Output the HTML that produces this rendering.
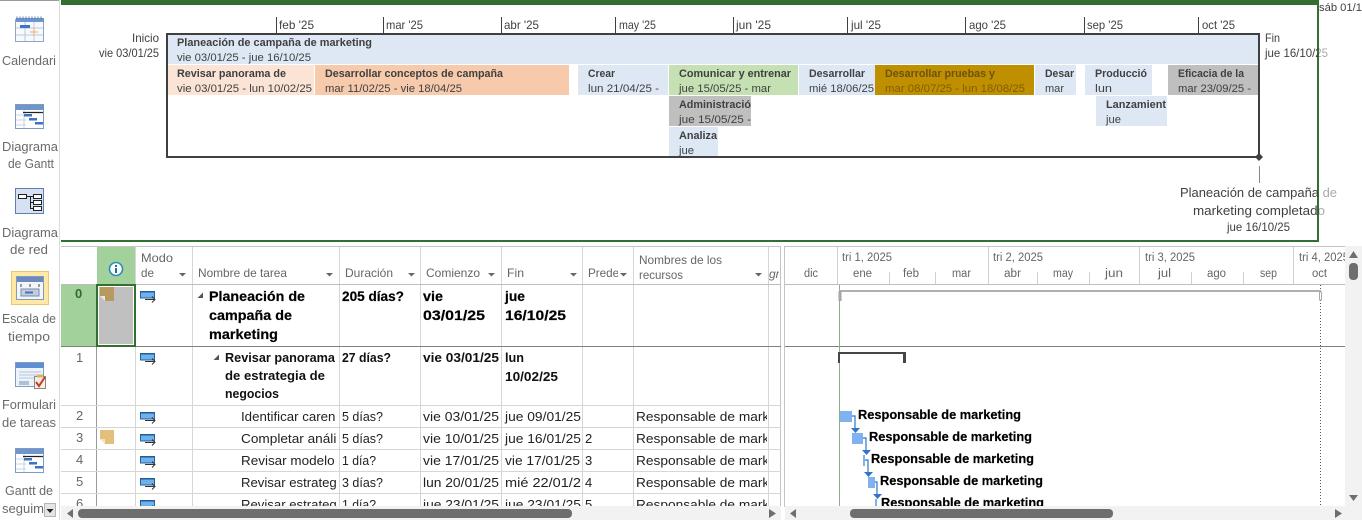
<!DOCTYPE html>
<html lang="es">
<head>
<meta charset="utf-8">
<title>Planeación de campaña de marketing</title>
<style>
html,body{margin:0;padding:0;background:#fff;width:1362px;height:520px;overflow:hidden}
svg{display:block}
text{font-family:"Liberation Sans",sans-serif;white-space:pre}
.side{font-size:13px;fill:#6a6a6a}
.mon{font-size:12px;fill:#404040}
.bb{font-size:11px;font-weight:bold;fill:#404040}
.br{font-size:11px;fill:#404040}
.hd{font-size:12px;fill:#666}
.gh{font-size:11.5px;fill:#666}
.t{font-size:13px;fill:#222}
.tb{font-size:14px;font-weight:bold;fill:#000;stroke:#000;stroke-width:.2}
.tb2{font-size:13px;font-weight:bold;fill:#111}
.n{font-size:13px;fill:#666}
.lab{font-size:13px;font-weight:bold;fill:#000;stroke:#000;stroke-width:.2}
</style>
</head>
<body>
<svg width="1362" height="520" viewBox="0 0 1362 520" xmlns="http://www.w3.org/2000/svg">
<defs>
<clipPath id="cName"><rect x="193" y="285" width="143" height="222"/></clipPath>
<clipPath id="cGrid"><rect x="61" y="285" width="720" height="222"/></clipPath>
<clipPath id="cFin"><rect x="502" y="285" width="79" height="222"/></clipPath>
<clipPath id="cRes"><rect x="634" y="285" width="133" height="222"/></clipPath>
<clipPath id="cGantt"><rect x="785" y="285" width="560" height="221"/></clipPath>
<clipPath id="cHead"><rect x="785" y="247" width="560" height="38"/></clipPath>
<clipPath id="cPre"><rect x="584" y="260" width="34" height="24"/></clipPath>
<clipPath id="cAgr"><rect x="769" y="262" width="10" height="20"/></clipPath>
<clipPath id="cSeg"><rect x="0" y="500" width="44" height="20"/></clipPath>
<g id="mode">
<rect x="0.5" y="1.500" width="14" height="6.500" fill="#6fb1ea" stroke="#2a5f9e"/>
<rect x="0" y="1" width="15" height="1.500" fill="#1f5c9e"/>
<path d="M5 9.500H15M12 6.500l3 3-3 3" fill="none" stroke="#333" stroke-width="1"/>
</g>
<g id="gicon">
<rect x="0.5" y="0.5" width="28" height="24" fill="#fff" stroke="#7d9cc4"/>
<rect x="1" y="1" width="28" height="5" fill="#6f96cc"/>
<path d="M1 11h10M1 16h10M1 21h10M9 6v18" stroke="#c5d3e6" fill="none"/>
<path d="M8 8.500h20" stroke="#222" stroke-width="1.200"/>
<rect x="9" y="10" width="8" height="2.500" fill="#3f74c4"/>
<rect x="14" y="14" width="8" height="2.500" fill="#3f74c4"/>
<rect x="20" y="18" width="8" height="2.500" fill="#3f74c4"/>
</g>
</defs>

<rect width="1362" height="520" fill="#fff"/>

<!-- Left sidebar -->
<rect x="0" y="0" width="59" height="1" fill="#9a9a9a"/>
<rect x="59" y="0" width="1" height="520" fill="#dcdcdc"/>

<g>
<rect x="15.500" y="19.500" width="28" height="22" fill="#f8f9fc" stroke="#8ea6c8"/>
<rect x="16" y="18" width="28" height="4" fill="#6f96cc"/>
<path d="M17 16.500v3M20 16.500v3M23 16.500v3M26 16.500v3M29 16.500v3M32 16.500v3M35 16.500v3M38 16.500v3M41 16.500v3" stroke="#5b7fb5" fill="none"/>
<path d="M16 28h27M16 35h27M25 22v19M34 22v19" stroke="#bcc9dc" fill="none"/>
<rect x="20" y="25" width="10" height="3" fill="#3f74c4"/>
<path d="M30 32h8M34 28v8" stroke="#e5b26a" fill="none"/>
</g>
<text class="side" x="2" y="65" textLength="54" lengthAdjust="spacingAndGlyphs">Calendari</text>

<use href="#gicon" x="15" y="104"/>
<text class="side" x="2" y="151" textLength="56" lengthAdjust="spacingAndGlyphs">Diagrama</text>
<text class="side" x="8" y="168" textLength="46" lengthAdjust="spacingAndGlyphs">de Gantt</text>

<g>
<rect x="15.500" y="188.500" width="28" height="25" fill="#d6e1f2" stroke="#5d7fb3"/>
<g fill="#fff" stroke="#222">
<rect x="18.500" y="194.500" width="8" height="4"/>
<rect x="33.500" y="194.500" width="8" height="4"/>
<rect x="33.500" y="200.500" width="8" height="4"/>
<rect x="33.500" y="206.500" width="8" height="4"/>
</g>
<path d="M26.500 196.500h7M30.500 196.500v12h3M30.500 202.500h3" stroke="#222" fill="none"/>
</g>
<text class="side" x="2" y="237" textLength="56" lengthAdjust="spacingAndGlyphs">Diagrama</text>
<text class="side" x="10" y="254" textLength="38" lengthAdjust="spacingAndGlyphs">de red</text>

<rect x="11.500" y="271.500" width="37" height="33" fill="#fde8a6" stroke="#e8c56e"/>
<g>
<rect x="16.500" y="276.500" width="27" height="23" fill="#f3f5f9" stroke="#7d9cc4"/>
<rect x="17" y="277" width="26" height="5" fill="#6f88bf"/>
<path d="M21 284v3M30 284v3M39 284v3" stroke="#444"/>
<rect x="21" y="289" width="18" height="7" fill="#c3cddd" stroke="#7a8aa5"/>
<rect x="25" y="291.500" width="8" height="2" fill="#3f74c4"/>
</g>
<text class="side" x="2" y="323" textLength="54" lengthAdjust="spacingAndGlyphs">Escala de</text>
<text class="side" x="8" y="341" textLength="42" lengthAdjust="spacingAndGlyphs">tiempo</text>

<g>
<rect x="15.500" y="362.500" width="28" height="24" fill="#eef3fa" stroke="#7d9cc4"/>
<rect x="16" y="363" width="28" height="5" fill="#5f8fd0"/>
<path d="M19 372h22M19 375h22M19 378h22" stroke="#b3c4dc"/>
<rect x="19" y="381" width="10" height="4" fill="#aebfd8"/>
<rect x="34.500" y="376.500" width="11" height="12" fill="#f5f0e4" stroke="#8a8a8a"/>
<rect x="37" y="374.500" width="6" height="3" fill="#e0b060"/>
<path d="M36 382l3 4 6-9" stroke="#c8392b" stroke-width="2" fill="none"/>
</g>
<text class="side" x="2" y="409" textLength="54" lengthAdjust="spacingAndGlyphs">Formulari</text>
<text class="side" x="2" y="427" textLength="54" lengthAdjust="spacingAndGlyphs">de tareas</text>

<use href="#gicon" x="15" y="448"/>
<text class="side" x="5" y="495" textLength="48" lengthAdjust="spacingAndGlyphs">Gantt de</text>
<text class="side" x="2" y="513" clip-path="url(#cSeg)">seguimiento</text>
<rect x="44.500" y="503.500" width="11" height="13" fill="#e4e4e4" stroke="#b5b5b5"/>
<path d="M46.500 509h7l-3.500 4z" fill="#222"/>

<!-- Timeline -->
<rect x="61" y="0" width="1257" height="5" fill="#33702f"/>
<rect x="1317" y="0" width="2" height="240" fill="#33702f"/>
<rect x="61" y="240" width="1258" height="2" fill="#33702f"/>
<text class="br" x="1319" y="11" textLength="43" lengthAdjust="spacingAndGlyphs">sáb 01/1</text>

<g fill="#404040">
<rect x="276" y="17" width="1" height="17"/><rect x="383" y="17" width="1" height="17"/>
<rect x="501" y="17" width="1" height="17"/><rect x="615" y="17" width="1" height="17"/>
<rect x="733" y="17" width="1" height="17"/><rect x="847" y="17" width="1" height="17"/>
<rect x="965" y="17" width="1" height="17"/><rect x="1084" y="17" width="1" height="17"/>
<rect x="1198" y="17" width="1" height="17"/>
</g>
<text class="mon" x="279" y="29" textLength="35" lengthAdjust="spacingAndGlyphs">feb '25</text>
<text class="mon" x="386" y="29" textLength="37" lengthAdjust="spacingAndGlyphs">mar '25</text>
<text class="mon" x="504" y="29" textLength="35" lengthAdjust="spacingAndGlyphs">abr '25</text>
<text class="mon" x="619" y="29" textLength="37" lengthAdjust="spacingAndGlyphs">may '25</text>
<text class="mon" x="736" y="29" textLength="35" lengthAdjust="spacingAndGlyphs">jun '25</text>
<text class="mon" x="851" y="29" textLength="30" lengthAdjust="spacingAndGlyphs">jul '25</text>
<text class="mon" x="969" y="29" textLength="37" lengthAdjust="spacingAndGlyphs">ago '25</text>
<text class="mon" x="1087" y="29" textLength="36" lengthAdjust="spacingAndGlyphs">sep '25</text>
<text class="mon" x="1202" y="29" textLength="33" lengthAdjust="spacingAndGlyphs">oct '25</text>

<text class="mon" x="132" y="42" textLength="27" lengthAdjust="spacingAndGlyphs">Inicio</text>
<text class="mon" x="99" y="57" textLength="60" lengthAdjust="spacingAndGlyphs">vie 03/01/25</text>
<text class="mon" x="1265" y="42" textLength="15" lengthAdjust="spacingAndGlyphs">Fin</text>
<text class="mon" x="1265" y="57" textLength="63" lengthAdjust="spacingAndGlyphs">jue 16/10/25</text>

<!-- Timeline bars -->
<rect x="168" y="35" width="1090" height="29" fill="#dee8f5"/>
<rect x="168" y="65" width="146" height="30" fill="#fbe4d6"/>
<rect x="315" y="65" width="254" height="30" fill="#f7caac"/>
<rect x="578" y="65" width="90" height="30" fill="#dee8f5"/>
<rect x="669" y="65" width="129" height="30" fill="#c5e0b3"/>
<rect x="799" y="65" width="76" height="30" fill="#dee8f5"/>
<rect x="875" y="65" width="159" height="30" fill="#bf8f00"/>
<rect x="1035" y="65" width="41" height="30" fill="#dee8f5"/>
<rect x="1085" y="65" width="67" height="30" fill="#dee8f5"/>
<rect x="1168" y="65" width="90" height="30" fill="#bfbfbf"/>
<rect x="669" y="96" width="82" height="30" fill="#bfbfbf"/>
<rect x="1096" y="96" width="71" height="30" fill="#dee8f5"/>
<rect x="669" y="127" width="49" height="29" fill="#dee8f5"/>
<rect x="167" y="34" width="1092" height="123" fill="none" stroke="#404040" stroke-width="2"/>

<text class="bb" x="177" y="46" textLength="195" lengthAdjust="spacingAndGlyphs">Planeación de campaña de marketing</text>
<text class="br" x="177" y="61" textLength="134" lengthAdjust="spacingAndGlyphs">vie 03/01/25 - jue 16/10/25</text>
<text class="bb" x="177" y="77" textLength="109" lengthAdjust="spacingAndGlyphs">Revisar panorama de</text>
<text class="br" x="177" y="92" textLength="135" lengthAdjust="spacingAndGlyphs">vie 03/01/25 - lun 10/02/25</text>
<text class="bb" x="325" y="77" textLength="178" lengthAdjust="spacingAndGlyphs">Desarrollar conceptos de campaña</text>
<text class="br" x="325" y="92" textLength="137" lengthAdjust="spacingAndGlyphs">mar 11/02/25 - vie 18/04/25</text>
<text class="bb" x="588" y="77" textLength="27" lengthAdjust="spacingAndGlyphs">Crear</text>
<text class="br" x="588" y="92" textLength="71" lengthAdjust="spacingAndGlyphs">lun 21/04/25 -</text>
<text class="bb" x="679" y="77" textLength="112" lengthAdjust="spacingAndGlyphs">Comunicar y entrenar</text>
<text class="br" x="679" y="92" textLength="92" lengthAdjust="spacingAndGlyphs">jue 15/05/25 - mar</text>
<text class="bb" x="809" y="77" textLength="56" lengthAdjust="spacingAndGlyphs">Desarrollar</text>
<text class="br" x="809" y="92" textLength="65" lengthAdjust="spacingAndGlyphs">mié 18/06/25</text>
<text class="bb" x="885" y="77" textLength="110" lengthAdjust="spacingAndGlyphs" style="fill:#6b5310">Desarrollar pruebas y</text>
<text class="br" x="885" y="92" textLength="140" lengthAdjust="spacingAndGlyphs" style="fill:#7f5f00">mar 08/07/25 - lun 18/08/25</text>
<text class="bb" x="1045" y="77" textLength="29" lengthAdjust="spacingAndGlyphs">Desar</text>
<text class="br" x="1045" y="92" textLength="19" lengthAdjust="spacingAndGlyphs">mar</text>
<text class="bb" x="1095" y="77" textLength="52" lengthAdjust="spacingAndGlyphs">Producció</text>
<text class="br" x="1095" y="92" textLength="17" lengthAdjust="spacingAndGlyphs">lun</text>
<text class="bb" x="1178" y="77" textLength="66" lengthAdjust="spacingAndGlyphs">Eficacia de la</text>
<text class="br" x="1178" y="92" textLength="73" lengthAdjust="spacingAndGlyphs">mar 23/09/25 -</text>
<text class="bb" x="679" y="108" textLength="72" lengthAdjust="spacingAndGlyphs">Administració</text>
<text class="br" x="679" y="123" textLength="72" lengthAdjust="spacingAndGlyphs">jue 15/05/25 -</text>
<text class="bb" x="1106" y="108" textLength="60" lengthAdjust="spacingAndGlyphs">Lanzamient</text>
<text class="br" x="1106" y="123" textLength="15" lengthAdjust="spacingAndGlyphs">jue</text>
<text class="bb" x="679" y="139" textLength="38" lengthAdjust="spacingAndGlyphs">Analiza</text>
<text class="br" x="679" y="154" textLength="15" lengthAdjust="spacingAndGlyphs">jue</text>

<path d="M1259 153l4 4-4 4-4-4z" fill="#404040"/>
<rect x="1259" y="166" width="1" height="17" fill="#8a8a8a"/>
<text x="1180" y="197" textLength="157" lengthAdjust="spacingAndGlyphs" style="font-size:13px;fill:#404040">Planeación de campaña de</text>
<text x="1193" y="215" textLength="132" lengthAdjust="spacingAndGlyphs" style="font-size:13px;fill:#404040">marketing completado</text>
<text class="mon" x="1227" y="231" textLength="63" lengthAdjust="spacingAndGlyphs">jue 16/10/25</text>
<rect x="1319" y="30" width="26" height="205" fill="#fff" opacity=".55"/>

<!-- Table header -->
<rect x="61" y="246" width="720" height="1" fill="#c4c4c4"/>
<rect x="785" y="246" width="560" height="1" fill="#c4c4c4"/>
<rect x="97" y="247" width="38" height="37" fill="#a2d19c"/>
<circle cx="116" cy="269" r="6.500" fill="#fff" stroke="#2e8ac0" stroke-width="1.600"/>
<rect x="115" y="268" width="2" height="5" fill="#1f6f9f"/>
<rect x="115" y="265" width="2" height="2" fill="#1f6f9f"/>

<g fill="#d6d6d6">
<rect x="135" y="247" width="1" height="260"/>
<rect x="192" y="247" width="1" height="260"/>
<rect x="339" y="247" width="1" height="260"/>
<rect x="420" y="247" width="1" height="260"/>
<rect x="501" y="247" width="1" height="260"/>
<rect x="582" y="247" width="1" height="260"/>
<rect x="633" y="247" width="1" height="260"/>
<rect x="768" y="247" width="1" height="260"/>
</g>
<rect x="96" y="285" width="1" height="222" fill="#9a9a9a"/>
<rect x="780" y="246" width="1" height="261" fill="#c4c4c4"/>
<rect x="784" y="246" width="1" height="261" fill="#c4c4c4"/>

<text class="hd" x="141" y="262" textLength="32" lengthAdjust="spacingAndGlyphs">Modo</text>
<text class="hd" x="141" y="277" textLength="13" lengthAdjust="spacingAndGlyphs">de</text>
<text class="hd" x="198" y="277" textLength="89" lengthAdjust="spacingAndGlyphs">Nombre de tarea</text>
<text class="hd" x="345" y="277" textLength="48" lengthAdjust="spacingAndGlyphs">Duración</text>
<text class="hd" x="426" y="277" textLength="54" lengthAdjust="spacingAndGlyphs">Comienzo</text>
<text class="hd" x="507" y="277" textLength="17" lengthAdjust="spacingAndGlyphs">Fin</text>
<text class="hd" x="588" y="277" textLength="72" lengthAdjust="spacingAndGlyphs" clip-path="url(#cPre)">Predecesoras</text>
<text class="hd" x="639" y="264" textLength="83" lengthAdjust="spacingAndGlyphs">Nombres de los</text>
<text class="hd" x="639" y="279" textLength="44" lengthAdjust="spacingAndGlyphs">recursos</text>
<text class="hd" x="761" y="278" font-style="italic" clip-path="url(#cAgr)">Agregar</text>
<g fill="#666">
<path d="M179 273h7l-3.500 3.500z"/><path d="M326 273h7l-3.500 3.500z"/>
<path d="M408 273h7l-3.500 3.500z"/><path d="M488 273h7l-3.500 3.500z"/>
<path d="M570 273h7l-3.500 3.500z"/><path d="M620 273h7l-3.500 3.500z"/>
<path d="M755 273h7l-3.500 3.500z"/>
</g>

<!-- Row lines -->
<rect x="61" y="284" width="720" height="1" fill="#bdbdbd"/>
<rect x="785" y="284" width="560" height="1" fill="#bdbdbd"/>
<g fill="#d6d6d6">
<rect x="61" y="405" width="720" height="1"/>
<rect x="61" y="427" width="720" height="1"/>
<rect x="61" y="449" width="720" height="1"/>
<rect x="61" y="471" width="720" height="1"/>
<rect x="61" y="493" width="720" height="1"/>
</g>
<rect x="61" y="346" width="720" height="1" fill="#7f7f7f"/>
<rect x="785" y="346" width="560" height="1" fill="#7f7f7f"/>

<!-- Row 0 selection -->
<rect x="61" y="285" width="35" height="61" fill="#a2d19c"/>
<rect x="97" y="285" width="38" height="61" fill="#c0c0c0" stroke="#33702f" stroke-width="2"/>
<rect x="98.500" y="286.500" width="35" height="58" fill="none" stroke="#fff"/>
<path d="M100 287h14v14h-14z" fill="#b89a5e"/>
<path d="M100 296h5v5h-5z" fill="#c0c0c0"/>
<path d="M100 296h5v5z" fill="#e8e8e8"/>
<text x="75" y="298" style="font-size:13px;font-weight:bold;fill:#2f6b2f">0</text>

<!-- Row numbers -->
<text class="n" x="76" y="362">1</text>
<text class="n" x="76" y="420">2</text>
<text class="n" x="76" y="442">3</text>
<text class="n" x="76" y="464">4</text>
<text class="n" x="76" y="486">5</text>
<g clip-path="url(#cGrid)"><text class="n" x="76" y="508">6</text></g>

<path d="M100 430h14v14h-14z" fill="#e2c07c"/>
<path d="M100 439h5v5h-5z" fill="#fff"/>
<path d="M100 439h5v5z" fill="#f2e2bd"/>

<g clip-path="url(#cGrid)">
<use href="#mode" x="140" y="290"/>
<use href="#mode" x="140" y="352"/>
<use href="#mode" x="140" y="411"/>
<use href="#mode" x="140" y="433"/>
<use href="#mode" x="140" y="455"/>
<use href="#mode" x="140" y="477"/>
<use href="#mode" x="140" y="499"/>
</g>

<!-- Row content -->
<path d="M203 292.500v5.500h-5.500z" fill="#555"/>
<text class="tb" x="209" y="301" textLength="96" lengthAdjust="spacingAndGlyphs">Planeación de</text>
<text class="tb" x="209" y="320" textLength="83" lengthAdjust="spacingAndGlyphs">campaña de</text>
<text class="tb" x="209" y="339" textLength="69" lengthAdjust="spacingAndGlyphs">marketing</text>
<text class="tb" x="342" y="301" textLength="62" lengthAdjust="spacingAndGlyphs">205 días?</text>
<text class="tb" x="423" y="301" textLength="20" lengthAdjust="spacingAndGlyphs">vie</text>
<text class="tb" x="423" y="320" textLength="62" lengthAdjust="spacingAndGlyphs">03/01/25</text>
<text class="tb" x="505" y="301" textLength="20" lengthAdjust="spacingAndGlyphs">jue</text>
<text class="tb" x="505" y="320" textLength="61" lengthAdjust="spacingAndGlyphs">16/10/25</text>

<path d="M219 354.500v5.500h-5.500z" fill="#555"/>
<text class="tb2" x="225" y="362" textLength="110" lengthAdjust="spacingAndGlyphs">Revisar panorama</text>
<text class="tb2" x="225" y="380" textLength="100" lengthAdjust="spacingAndGlyphs">de estrategia de</text>
<text class="tb2" x="225" y="398" textLength="54" lengthAdjust="spacingAndGlyphs">negocios</text>
<text class="tb2" x="342" y="362" textLength="49" lengthAdjust="spacingAndGlyphs">27 días?</text>
<text class="tb2" x="423" y="362" textLength="76" lengthAdjust="spacingAndGlyphs">vie 03/01/25</text>
<text class="tb2" x="505" y="362" textLength="19" lengthAdjust="spacingAndGlyphs">lun</text>
<text class="tb2" x="505" y="381" textLength="53" lengthAdjust="spacingAndGlyphs">10/02/25</text>

<g clip-path="url(#cName)">
<text class="t" x="241" y="421" textLength="118" lengthAdjust="spacingAndGlyphs">Identificar carencias</text>
<text class="t" x="241" y="443" textLength="112" lengthAdjust="spacingAndGlyphs">Completar análisis</text>
<text class="t" x="241" y="465" textLength="170" lengthAdjust="spacingAndGlyphs">Revisar modelo de negocios</text>
<text class="t" x="241" y="487" textLength="106" lengthAdjust="spacingAndGlyphs">Revisar estrategia</text>
<text class="t" x="241" y="509" textLength="106" lengthAdjust="spacingAndGlyphs">Revisar estrategia</text>
</g>

<g clip-path="url(#cGrid)">
<text class="t" x="342" y="421" textLength="41" lengthAdjust="spacingAndGlyphs">5 días?</text>
<text class="t" x="342" y="443" textLength="41" lengthAdjust="spacingAndGlyphs">5 días?</text>
<text class="t" x="342" y="465" textLength="34" lengthAdjust="spacingAndGlyphs">1 día?</text>
<text class="t" x="342" y="487" textLength="41" lengthAdjust="spacingAndGlyphs">3 días?</text>
<text class="t" x="342" y="509" textLength="34" lengthAdjust="spacingAndGlyphs">1 día?</text>
<text class="t" x="423" y="421" textLength="76" lengthAdjust="spacingAndGlyphs">vie 03/01/25</text>
<text class="t" x="423" y="443" textLength="76" lengthAdjust="spacingAndGlyphs">vie 10/01/25</text>
<text class="t" x="423" y="465" textLength="76" lengthAdjust="spacingAndGlyphs">vie 17/01/25</text>
<text class="t" x="423" y="487" textLength="76" lengthAdjust="spacingAndGlyphs">lun 20/01/25</text>
<text class="t" x="423" y="509" textLength="76" lengthAdjust="spacingAndGlyphs">jue 23/01/25</text>
<text class="t" x="585" y="443">2</text>
<text class="t" x="585" y="465">3</text>
<text class="t" x="585" y="487">4</text>
<text class="t" x="585" y="509">5</text>
</g>
<g clip-path="url(#cFin)">
<text class="t" x="505" y="421" textLength="76" lengthAdjust="spacingAndGlyphs">jue 09/01/25</text>
<text class="t" x="505" y="443" textLength="76" lengthAdjust="spacingAndGlyphs">jue 16/01/25</text>
<text class="t" x="505" y="465" textLength="75" lengthAdjust="spacingAndGlyphs">vie 17/01/25</text>
<text class="t" x="505" y="487" textLength="84" lengthAdjust="spacingAndGlyphs">mié 22/01/25</text>
<text class="t" x="505" y="509" textLength="76" lengthAdjust="spacingAndGlyphs">jue 23/01/25</text>
</g>
<g clip-path="url(#cRes)">
<text class="t" x="636" y="421" textLength="163" lengthAdjust="spacingAndGlyphs">Responsable de marketing</text>
<text class="t" x="636" y="443" textLength="163" lengthAdjust="spacingAndGlyphs">Responsable de marketing</text>
<text class="t" x="636" y="465" textLength="163" lengthAdjust="spacingAndGlyphs">Responsable de marketing</text>
<text class="t" x="636" y="487" textLength="163" lengthAdjust="spacingAndGlyphs">Responsable de marketing</text>
<text class="t" x="636" y="509" textLength="163" lengthAdjust="spacingAndGlyphs">Responsable de marketing</text>
</g>

<!-- Gantt header -->
<g fill="#d0d0d0">
<rect x="837" y="247" width="1" height="37"/><rect x="988" y="247" width="1" height="37"/>
<rect x="1139" y="247" width="1" height="37"/><rect x="1293" y="247" width="1" height="37"/>
<rect x="889" y="272" width="1" height="12"/><rect x="935" y="272" width="1" height="12"/>
<rect x="1037" y="272" width="1" height="12"/><rect x="1089" y="272" width="1" height="12"/>
<rect x="1191" y="272" width="1" height="12"/><rect x="1243" y="272" width="1" height="12"/>
</g>
<g clip-path="url(#cHead)">
<text class="gh" x="842" y="261" textLength="50" lengthAdjust="spacingAndGlyphs">tri 1, 2025</text>
<text class="gh" x="993" y="261" textLength="50" lengthAdjust="spacingAndGlyphs">tri 2, 2025</text>
<text class="gh" x="1145" y="261" textLength="50" lengthAdjust="spacingAndGlyphs">tri 3, 2025</text>
<text class="gh" x="1299" y="261" textLength="50" lengthAdjust="spacingAndGlyphs">tri 4, 2025</text>
<text class="gh" x="804" y="277" textLength="14" lengthAdjust="spacingAndGlyphs">dic</text>
<text class="gh" x="853" y="277" textLength="19" lengthAdjust="spacingAndGlyphs">ene</text>
<text class="gh" x="903" y="277" textLength="16" lengthAdjust="spacingAndGlyphs">feb</text>
<text class="gh" x="952" y="277" textLength="19" lengthAdjust="spacingAndGlyphs">mar</text>
<text class="gh" x="1004" y="277" textLength="17" lengthAdjust="spacingAndGlyphs">abr</text>
<text class="gh" x="1053" y="277" textLength="20" lengthAdjust="spacingAndGlyphs">may</text>
<text class="gh" x="1105" y="277" textLength="18" lengthAdjust="spacingAndGlyphs">jun</text>
<text class="gh" x="1158" y="277" textLength="13" lengthAdjust="spacingAndGlyphs">jul</text>
<text class="gh" x="1207" y="277" textLength="19" lengthAdjust="spacingAndGlyphs">ago</text>
<text class="gh" x="1260" y="277" textLength="17" lengthAdjust="spacingAndGlyphs">sep</text>
<text class="gh" x="1312" y="277" textLength="15" lengthAdjust="spacingAndGlyphs">oct</text>
</g>

<!-- Gantt body -->
<rect x="839" y="285" width="1" height="222" fill="#8fae8a"/>
<path d="M1320.500 285V507" stroke="#555" stroke-dasharray="1 2" fill="none"/>
<rect x="839" y="290" width="482" height="2" fill="#b0b0b0"/>
<rect x="838.500" y="291" width="3" height="10" fill="#a5a5a5"/>
<rect x="1319.500" y="292" width="2" height="8" fill="#fff" stroke="#aaa"/>
<rect x="839" y="352" width="67" height="2" fill="#454545"/>
<rect x="838" y="352" width="2" height="11" fill="#454545"/>
<rect x="903" y="352" width="3" height="11" fill="#454545"/>

<g clip-path="url(#cGantt)">
<rect x="840" y="411" width="12" height="11" fill="#7fb2ee"/>
<rect x="852" y="433" width="11" height="11" fill="#7fb2ee"/>
<rect x="863" y="455" width="2" height="11" fill="#7fb2ee"/>
<rect x="868" y="477" width="7" height="11" fill="#7fb2ee"/>
<rect x="875" y="499" width="2" height="11" fill="#7fb2ee"/>
<g fill="none" stroke="#2f74c8" stroke-width="1.200">
<path d="M852 416h3v13"/><path d="M863 438h3v13"/><path d="M865 460h3v13"/><path d="M875 482h2v13"/>
</g>
<g fill="#2f74c8">
<path d="M851 428h9l-4.500 5z"/><path d="M862 450h9l-4.500 5z"/><path d="M864 472h9l-4.500 5z"/><path d="M873 494h9l-4.500 5z"/>
</g>
<text class="lab" x="858" y="419" textLength="163" lengthAdjust="spacingAndGlyphs">Responsable de marketing</text>
<text class="lab" x="869" y="441" textLength="163" lengthAdjust="spacingAndGlyphs">Responsable de marketing</text>
<text class="lab" x="871" y="463" textLength="163" lengthAdjust="spacingAndGlyphs">Responsable de marketing</text>
<text class="lab" x="880" y="485" textLength="163" lengthAdjust="spacingAndGlyphs">Responsable de marketing</text>
<text class="lab" x="881" y="507" textLength="163" lengthAdjust="spacingAndGlyphs">Responsable de marketing</text>
</g>

<!-- Scrollbars -->
<rect x="61" y="506" width="720" height="14" fill="#f2f2f2"/>
<rect x="785" y="506" width="577" height="14" fill="#f2f2f2"/>
<rect x="1345" y="246" width="17" height="274" fill="#f2f2f2"/>
<rect x="78" y="509" width="494" height="9" rx="4" fill="#6e6e6e"/>
<rect x="850" y="509" width="263" height="9" rx="4" fill="#6e6e6e"/>
<rect x="1349" y="263" width="9" height="17" rx="4" fill="#6e6e6e"/>
<g fill="#6e6e6e">
<path d="M73 509v9l-6-4.500z"/>
<path d="M769 509v9l7-4.500z"/>
<path d="M796 509v9l-6-4.500z"/>
<path d="M1335 509v9l7-4.500z"/>
<path d="M1349 258h9l-4.500-7z"/>
<path d="M1349 495h9l-4.500 6z"/>
</g>
</svg>
</body>
</html>
